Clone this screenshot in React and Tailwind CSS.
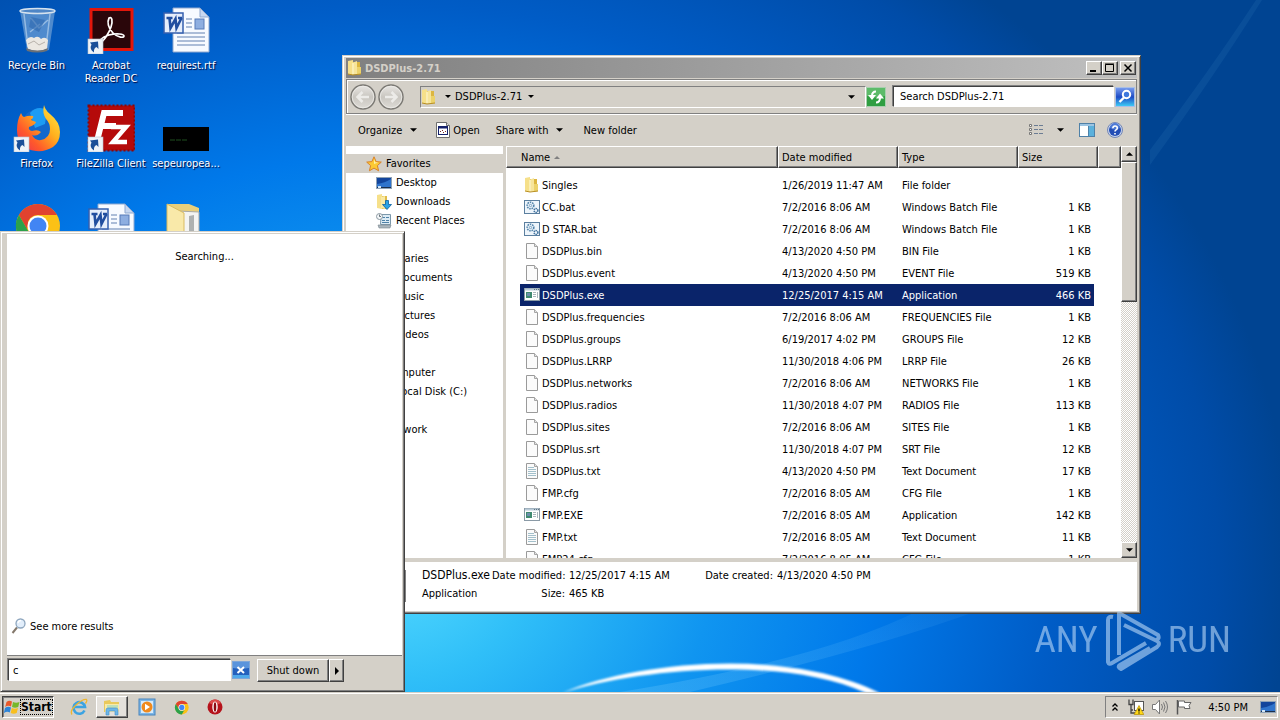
import React from "react";

const files = [
  { name: "Singles", date: "1/26/2019 11:47 AM", type: "File folder", size: "", icon: "folder" },
  { name: "CC.bat", date: "7/2/2016 8:06 AM", type: "Windows Batch File", size: "1 KB", icon: "batch" },
  { name: "D STAR.bat", date: "7/2/2016 8:06 AM", type: "Windows Batch File", size: "1 KB", icon: "batch" },
  { name: "DSDPlus.bin", date: "4/13/2020 4:50 PM", type: "BIN File", size: "1 KB", icon: "page" },
  { name: "DSDPlus.event", date: "4/13/2020 4:50 PM", type: "EVENT File", size: "519 KB", icon: "page" },
  { name: "DSDPlus.exe", date: "12/25/2017 4:15 AM", type: "Application", size: "466 KB", icon: "app", selected: true },
  { name: "DSDPlus.frequencies", date: "7/2/2016 8:06 AM", type: "FREQUENCIES File", size: "1 KB", icon: "page" },
  { name: "DSDPlus.groups", date: "6/19/2017 4:02 PM", type: "GROUPS File", size: "12 KB", icon: "page" },
  { name: "DSDPlus.LRRP", date: "11/30/2018 4:06 PM", type: "LRRP File", size: "26 KB", icon: "page" },
  { name: "DSDPlus.networks", date: "7/2/2016 8:06 AM", type: "NETWORKS File", size: "1 KB", icon: "page" },
  { name: "DSDPlus.radios", date: "11/30/2018 4:07 PM", type: "RADIOS File", size: "113 KB", icon: "page" },
  { name: "DSDPlus.sites", date: "7/2/2016 8:06 AM", type: "SITES File", size: "1 KB", icon: "page" },
  { name: "DSDPlus.srt", date: "11/30/2018 4:07 PM", type: "SRT File", size: "12 KB", icon: "page" },
  { name: "DSDPlus.txt", date: "4/13/2020 4:50 PM", type: "Text Document", size: "17 KB", icon: "text" },
  { name: "FMP.cfg", date: "7/2/2016 8:05 AM", type: "CFG File", size: "1 KB", icon: "page" },
  { name: "FMP.EXE", date: "7/2/2016 8:05 AM", type: "Application", size: "142 KB", icon: "app" },
  { name: "FMP.txt", date: "7/2/2016 8:05 AM", type: "Text Document", size: "11 KB", icon: "text" },
  { name: "FMP24.cfg", date: "7/2/2016 8:05 AM", type: "CFG File", size: "1 KB", icon: "page" },
];

const raised =
  "border border-t-white border-l-white border-r-[#404040] border-b-[#404040] shadow-[inset_-1px_-1px_0_#808080]";
const sunken =
  "border border-t-[#808080] border-l-[#808080] border-r-white border-b-white";

/* ---------- small icons ---------- */

const FolderIcon = ({ className = "w-4 h-4" }) => (
  <svg viewBox="0 0 16 16" className={className} aria-hidden="true">
    <path d="M1 1l5-1v15l-5-1z" fill="#f6e08a" />
    <path d="M6 2h7v12H6z" fill="#dcb640" />
    <path d="M5 3l5-2v13l-5 1z" fill="#f7e59a" />
    <path d="M10 7h4v7l-4 1z" fill="#ecd26a" />
    <path d="M1 14l5 1 8-1" stroke="#b98f22" fill="none" />
    <path d="M6 3v11" stroke="#fdf6cf" />
  </svg>
);

const PageIcon = ({ lines }) => (
  <svg viewBox="0 0 16 16" className="w-4 h-4" aria-hidden="true">
    <path d="M2.500 .5h8l3 3v12h-11z" fill="#fbfbfb" stroke="#9a9a9a" />
    <path d="M10.500 .5v3h3" fill="#e4e4e4" stroke="#a5a5a5" />
    {lines && <path d="M4 4.500h6M4 6.500h8M4 8.500h8M4 10.500h8M4 12.500h8" stroke="#a3c0cb" />}
  </svg>
);

const BatchIcon = () => (
  <svg viewBox="0 0 16 16" className="w-4 h-4" aria-hidden="true">
    <rect x=".5" y="1.500" width="15" height="13" fill="#eef5fb" stroke="#5b7f9f" />
    <circle cx="6.500" cy="6.500" r="3.300" fill="none" stroke="#5586ac" strokeWidth="1.600" strokeDasharray="1.600 .8" />
    <circle cx="6.500" cy="6.500" r="1.200" fill="none" stroke="#7da3c2" />
    <circle cx="12" cy="11.500" r="1.900" fill="none" stroke="#41729d" strokeWidth="1.500" strokeDasharray="1.300 .6" />
  </svg>
);

const AppIcon = () => (
  <svg viewBox="0 0 16 16" className="w-4 h-4" aria-hidden="true">
    <rect x=".5" y="1.500" width="15" height="12" fill="#fff" stroke="#8a9aa6" />
    <path d="M1 2.500h14" stroke="#b9cbd8" strokeWidth="2" />
    <path d="M10 2.500h1M12 2.500h1M14 2.500h1" stroke="#5f7382" />
    <rect x="2" y="5" width="6" height="6" fill="#3f8a70" />
    <rect x="3" y="6" width="3" height="3" fill="#6d8fae" />
    <path d="M9 5.500h3M9 7.500h3M9 9.500h3M13.500 5v6" stroke="#a9b5bb" />
  </svg>
);

const FileIcon = ({ kind }) => {
  if (kind === "folder") return <FolderIcon />;
  if (kind === "batch") return <BatchIcon />;
  if (kind === "app") return <AppIcon />;
  return <PageIcon lines={kind === "text"} />;
};

const DesktopIcon = () => (
  <svg viewBox="0 0 16 16" className="w-4 h-4" aria-hidden="true">
    <rect x="0" y="2" width="16" height="12" fill="#8fa3b7" />
    <rect x="1" y="3" width="14" height="9" fill="#12459c" />
    <path d="M1 12V9q8-1 14-5v8z" fill="#2f74cc" />
    <path d="M1 12.500h14" stroke="#1c2f4b" />
    <rect x="2" y="11" width="3" height="2" fill="#cfe4f7" />
  </svg>
);

const DownloadsIcon = () => (
  <svg viewBox="0 0 16 16" className="w-4 h-4" aria-hidden="true">
    <path d="M1 1l5-1v15l-5-1z" fill="#f6e08a" />
    <path d="M6 2h5v13H6z" fill="#e0bb48" />
    <path d="M5 3l4-1v13l-4-1z" fill="#f9eaa6" />
    <path d="M9.500 6.500h3v4h3l-4.500 5-4.500-5h3z" fill="#2aa3e6" stroke="#0b5f9e" strokeWidth=".8" />
  </svg>
);

const RecentIcon = () => (
  <svg viewBox="0 0 16 16" className="w-4 h-4" aria-hidden="true">
    <path d="M5 1.500h9.500v10H4.500z" fill="#dcebf4" stroke="#7c98ab" />
    <path d="M6 4.500h3M10 4.500h3M6 7.500h3M10 7.500h3M6 9.500h7" stroke="#4f82a8" />
    <path d="M2 12h13l-1 3H3z" fill="#aab5bd" stroke="#7b868e" strokeWidth=".6" />
    <circle cx="3.500" cy="3.500" r="3" fill="#f4f7f9" stroke="#8d9aa3" />
    <path d="M3.500 1.500v2h1.500" stroke="#44525c" strokeWidth=".8" fill="none" />
  </svg>
);

const StarIcon = () => (
  <svg viewBox="0 0 16 16" className="w-4 h-4" aria-hidden="true">
    <path
      d="M8 .8l2.100 4.800 5.200.5-3.900 3.500 1.200 5.200L8 12.100l-4.600 2.700 1.200-5.200L.7 6.100l5.200-.5z"
      fill="#fcc934"
      stroke="#d9822b"
    />
    <path d="M8 3l1.200 3.300 3 .3L8 8z" fill="#fff1a8" />
  </svg>
);

const Caret = ({ className = "w-2 h-1" }) => (
  <svg viewBox="0 0 8 4" className={className} aria-hidden="true">
    <path d="M0 0h8L4 4z" fill="#000" />
  </svg>
);

const NavArrow = ({ flip }) => (
  <svg viewBox="0 0 26 26" className="w-[26px] h-[26px]" aria-hidden="true">
    <defs>
      <linearGradient id="navFill" x1="0" y1="0" x2="0" y2="1">
        <stop offset="0" stopColor="#e9e7e4" />
        <stop offset=".5" stopColor="#c9c6c0" />
        <stop offset="1" stopColor="#dedcd7" />
      </linearGradient>
    </defs>
    <circle cx="13" cy="13" r="12" fill="url(#navFill)" stroke="#7b7974" strokeWidth="1.500" />
    <circle cx="13" cy="13" r="10.800" fill="none" stroke="#efedea" strokeWidth=".8" />
    <path
      d="M19 13H8M12.500 8L7.500 13l5 5"
      transform={flip ? "rotate(180 13 13)" : undefined}
      fill="none"
      stroke="#ecebe8"
      strokeWidth="2.500"
    />
  </svg>
);

const RefreshIcon = () => (
  <svg viewBox="0 0 20 20" className="w-5 h-5" aria-hidden="true">
    <rect x=".5" y=".5" width="19" height="19" fill="#2f9e41" stroke="#a8cfae" />
    <path d="M1 1h18v8Q10 12 1 9z" fill="#5dbb69" />
    <path d="M10 4.500Q6 4.500 6 9" fill="none" stroke="#fff" strokeWidth="2" />
    <path d="M2 8h8l-4 5z" fill="#fff" />
    <path d="M10 15.500q4 0 4-5" fill="none" stroke="#fff" strokeWidth="2" />
    <path d="M10 11.500h8l-4-5z" fill="#fff" />
  </svg>
);

const SearchButtonIcon = () => (
  <svg viewBox="0 0 20 20" className="w-5 h-5" aria-hidden="true">
    <defs>
      <linearGradient id="searchFill" x1="0" y1="0" x2="0" y2="1">
        <stop offset="0" stopColor="#7b9ff0" />
        <stop offset=".5" stopColor="#1d4ac4" />
        <stop offset="1" stopColor="#3fd0f8" />
      </linearGradient>
    </defs>
    <rect x=".5" y=".5" width="19" height="19" fill="url(#searchFill)" stroke="#a9bfe6" />
    <circle cx="11.500" cy="7.500" r="3.700" fill="#3e78dd" stroke="#fff" strokeWidth="2" />
    <path d="M9 10.500L4.500 15" stroke="#fff" strokeWidth="2.400" />
  </svg>
);

const OpenIcon = () => (
  <svg viewBox="0 0 16 16" className="w-4 h-4" aria-hidden="true">
    <path d="M1.500 .5h10l3 3v12h-13z" fill="#fff" stroke="#6e6e6e" />
    <path d="M11.500 .5v3h3" fill="#ddd" stroke="#6e6e6e" />
    <rect x="3.500" y="4.500" width="9" height="8" fill="#fff" stroke="#14206b" />
    <path d="M3 5.500h10" stroke="#14206b" strokeWidth="2" />
    <path d="M5 9.500h1M7 8.500h1M8 10.500h1M10 9.500h1" stroke="#7d2b2b" />
  </svg>
);

const ViewIcon = () => (
  <svg viewBox="0 0 16 16" className="w-4 h-4" aria-hidden="true">
    <path d="M1.500 2.500h2v2h-2zM1.500 6.500h2v2h-2zM1.500 10.500h2v2h-2z" fill="#fff" stroke="#777" />
    <path d="M6 3.500h4M11 3.500h4M6 7.500h4M11 7.500h4M6 11.500h4M11 11.500h4" stroke="#6b7c93" />
  </svg>
);

const PaneIcon = () => (
  <svg viewBox="0 0 16 16" className="w-4 h-4" aria-hidden="true">
    <rect x=".5" y="1.500" width="15" height="13" fill="#fff" stroke="#4f81a8" />
    <path d="M1 3h14" stroke="#9cc4e2" strokeWidth="2" />
    <rect x="10" y="4" width="5" height="10" fill="#5bb1dc" />
    <path d="M9.500 4v10" stroke="#4f81a8" />
  </svg>
);

const HelpIcon = () => (
  <svg viewBox="0 0 16 16" className="w-4 h-4" aria-hidden="true">
    <circle cx="8" cy="8" r="7.500" fill="#c6d3ee" stroke="#7386b5" />
    <circle cx="8" cy="8" r="6" fill="#234db5" />
    <path d="M3 6a5 5 0 0 1 10 0Q8 9 3 6z" fill="#4f7ad6" />
    <path d="M5.800 6.300Q6 4 8 4q2.300 0 2.300 2 0 1.200-1.300 1.900-1 .6-1 1.600M8 11v1.600" fill="none" stroke="#fff" strokeWidth="1.600" />
  </svg>
);

const MagnifierIcon = () => (
  <svg viewBox="0 0 16 16" className="w-4 h-4" aria-hidden="true">
    <path d="M6 9.500L1.500 15" stroke="#84786b" strokeWidth="2" />
    <circle cx="9.500" cy="5.500" r="4.500" fill="#e2eefb" stroke="#8ea6be" strokeWidth="1.300" />
    <path d="M7 5q.5-2.500 3-2.500" stroke="#fff" strokeWidth="1.300" fill="none" />
  </svg>
);

const ClearIcon = () => (
  <svg viewBox="0 0 18 18" className="w-[18px] h-[18px]" aria-hidden="true">
    <rect x=".5" y=".5" width="17" height="17" fill="#2460bd" stroke="#7ea6d8" />
    <path d="M1 1h16v6Q9 8 1 7z" fill="#5a94dc" />
    <path d="M1 14h16v3H1z" fill="#4fa8ea" />
    <path d="M5.500 6l6.500 6M12 6l-6.500 6" stroke="#fff" strokeWidth="2" />
  </svg>
);

/* ---------- desktop icons ---------- */

const Shortcut = ({ x = 0, y = 32 }) => (
  <g transform={`translate(${x} ${y})`}>
    <rect width="15" height="15" fill="#eef3f8" stroke="#b9c2cb" strokeWidth=".6" />
    <path d="M6 13.500Q1 10 3.500 5.500L2 3.500 10 2.500 10.500 10 8.500 8Q5.500 9 6 13.500z" fill="#1a4f98" />
  </g>
);

const RecycleBin = () => (
  <svg viewBox="0 0 48 48" className="w-12 h-12" aria-hidden="true">
    <path d="M7 5h35l-6 39q-12 4-22 0z" fill="#8fb6dd" fillOpacity=".55" />
    <path d="M11 8l4 33M37 8l-4 33M18 12l8 10 9-8M17 26l10-8" stroke="#dcebfa" strokeOpacity=".5" strokeWidth="1.500" fill="none" />
    <path d="M18 11l14 3-6 12-10-5z" fill="#2e67ae" fillOpacity=".6" />
    <path d="M13 34q4-5 8-2 4-3 7 1 4-3 7 1l-1 9q-10 4-19 0z" fill="#ece8e2" />
    <path d="M15 38l6-3 5 4 6-3" stroke="#b7b1aa" fill="none" />
    <path d="M13 42q12 5 22 0l-1 3q-10 3-20 0z" fill="#6c7076" />
    <ellipse cx="24.500" cy="5" rx="17.500" ry="2.500" fill="#4f86c6" stroke="#d5e2ee" strokeWidth="1.500" />
  </svg>
);

const AcrobatIcon = () => (
  <svg viewBox="0 0 48 48" className="w-12 h-12" aria-hidden="true">
    <rect x="2.500" y="2" width="44" height="43" fill="#e2160b" />
    <rect x="5.500" y="5" width="38" height="37" fill="#2a060a" />
    <path
      d="M22 12c3-2 4 3 2 9s-7 14-11 16c-3 0 1-6 9-8s15-1 15 1-6 2-11-3-6-11-4-15z"
      fill="none"
      stroke="#fff"
      strokeWidth="1.700"
    />
    <Shortcut x={1} y={33} />
  </svg>
);

const WordDoc = () => (
  <svg viewBox="0 0 48 48" className="w-12 h-12" aria-hidden="true">
    <path d="M11 2h27l9 9v35H11z" fill="#f7faff" stroke="#8fa8cf" />
    <path d="M38 2v9h9z" fill="#c7d7f0" stroke="#8fa8cf" />
    <path d="M24 13h6M24 17h6M24 21h6M15 31h28M15 35h28M15 39h28M15 27h28" stroke="#94a9cc" strokeWidth="1.300" />
    <rect x="33" y="13" width="9" height="10" fill="#8eaee0" stroke="#577bb8" />
    <rect x="2" y="7" width="19" height="20" fill="#e6eefb" stroke="#355fae" strokeWidth="1.500" />
    <path d="M5 12h5M4.500 12h6M7.500 12l1 10 5-9 1 9 5-10M16 12h4" fill="none" stroke="#214e9f" strokeWidth="2.600" />
  </svg>
);

const FirefoxIcon = () => (
  <svg viewBox="0 0 48 48" className="w-12 h-12" aria-hidden="true">
    <defs>
      <linearGradient id="foxFill" x1="1" y1="0" x2="0" y2="1">
        <stop offset="0" stopColor="#fff14a" />
        <stop offset=".4" stopColor="#ffb01e" />
        <stop offset=".7" stopColor="#ff5a2a" />
        <stop offset="1" stopColor="#ea2a58" />
      </linearGradient>
    </defs>
    <circle cx="25" cy="21" r="16" fill="#1268cc" />
    <path d="M17 9q7-8 17-3l-2 14-10 4z" fill="#1c9cf4" />
    <path
      d="M31 1q1 5 6 9 10 8 10 18 0 10-7 15-8 5-17 4Q4 45 4 26q0-10 4-17 1 3 3 4 5-2 9-1 1 1-2 4l5 2q-1 3-7 5-1 3 3 4 6-2 9 1-4 5-9 3 3 6 9 5 9-2 9-11 0-6-4-10-4-6-2-14z"
      fill="url(#foxFill)"
    />
    <Shortcut x={1} y={33} />
  </svg>
);

const FileZillaIcon = () => (
  <svg viewBox="0 0 48 48" className="w-12 h-12" aria-hidden="true">
    <rect x="1.500" y="1.500" width="46" height="45" fill="#b50a0a" stroke="#8c0606" strokeWidth="2" strokeDasharray="2 2" />
    <path d="M10 37L17 9h19M14 22h15" stroke="#fff" strokeWidth="6" fill="none" />
    <path d="M24 23h15L26 38h14" stroke="#fff" strokeWidth="4.500" fill="none" />
    <Shortcut x={1} y={33} />
  </svg>
);

const BlackThumb = () => (
  <svg viewBox="0 0 48 48" className="w-12 h-12" aria-hidden="true">
    <rect x="1" y="23" width="46" height="24" fill="#000" />
    <path d="M8 36h17" stroke="#1f4f1f" strokeDasharray="5 1" />
  </svg>
);

const ChromeIcon = ({ className = "w-12 h-12" }) => (
  <svg viewBox="0 0 48 48" className={className} aria-hidden="true">
    <circle cx="25" cy="24" r="22" fill="#fbc116" />
    <path d="M5.900 13A22 22 0 0 1 44 13H25a11 11 0 0 0-9.500 5.500L14 27z" fill="#e0422f" />
    <path d="M5.900 13A22 22 0 0 0 25 46l9.500-16.500a11 11 0 0 1-19 0z" fill="#2ba14b" />
    <circle cx="25" cy="24" r="10.500" fill="#fff" />
    <circle cx="25" cy="24" r="8.500" fill="#4285f4" />
  </svg>
);

const BigFolder = () => (
  <svg viewBox="0 0 48 48" className="w-12 h-12" aria-hidden="true">
    <path d="M6 2h21l10 4v40H6z" fill="#e9cf7a" />
    <path d="M16 9l21 1v36H16z" fill="#f4f4f2" stroke="#a9a9a4" />
    <path d="M27 14l5-1v34h-5z" fill="#aeb1b0" />
    <path d="M5 2l17 9v37L5 42z" fill="#f9e9a9" stroke="#d9bb60" />
  </svg>
);

const shortcuts = [
  { label: "Recycle Bin", Icon: RecycleBin },
  { label: "Acrobat Reader DC", Icon: AcrobatIcon },
  { label: "requirest.rtf", Icon: WordDoc },
  { label: "Firefox", Icon: FirefoxIcon },
  { label: "FileZilla Client", Icon: FileZillaIcon },
  { label: "sepeuropea...", Icon: BlackThumb },
  { Icon: ChromeIcon },
  { Icon: WordDoc },
  { Icon: BigFolder },
];

const Wallpaper = () => (
  <svg viewBox="0 0 1280 720" preserveAspectRatio="none" className="absolute inset-0 w-full h-full" aria-hidden="true">
    <defs>
      <radialGradient id="sky" gradientUnits="userSpaceOnUse" cx="0" cy="0" r="1" gradientTransform="translate(390 560) scale(900 750)">
        <stop offset="0" stopColor="#56dcff" />
        <stop offset=".16" stopColor="#30bff8" />
        <stop offset=".36" stopColor="#1095f0" />
        <stop offset=".54" stopColor="#0079ea" />
        <stop offset=".74" stopColor="#005cc6" />
        <stop offset=".92" stopColor="#004ca8" />
        <stop offset="1" stopColor="#004492" />
      </radialGradient>
      <linearGradient id="beam" x1="0" y1="1" x2="1" y2="0">
        <stop offset="0" stopColor="#7fd0ff" stopOpacity=".25" />
        <stop offset="1" stopColor="#7fd0ff" stopOpacity=".06" />
      </linearGradient>
      <filter id="soft">
        <feGaussianBlur stdDeviation="1" />
      </filter>
    </defs>
    <rect width="1280" height="720" fill="url(#sky)" />
    <path d="M690 692Q870 650 980 610H920Q820 660 620 692z" fill="url(#beam)" />
    <path d="M1150 150Q1210 70 1256 0l6 0Q1215 75 1150 165z" fill="#7fd0ff" fillOpacity=".07" />
    <path d="M562 693C640 660 790 648 880 693L866 693C785 656 640 668 562 693z" fill="#fff" filter="url(#soft)" />
  </svg>
);

/* ---------- explorer window ---------- */

const TitleButton = ({ label, children, className = "" }) => (
  <button type="button" aria-label={label} className={`w-4 h-[14px] bg-[#d4d0c8] flex items-center justify-center ${raised} ${className}`}>
    <svg viewBox="0 0 10 10" className="w-[10px] h-[10px]" aria-hidden="true">
      {children}
    </svg>
  </button>
);

const TreeItem = ({ icon, label, root, active }) => (
  <li className={`h-[19px] flex items-center gap-1 leading-[14px] whitespace-nowrap ${root ? "pl-5" : "pl-[30px]"} ${active ? "bg-[#d4d0c8]" : ""}`}>
    <span className="w-4 h-4 shrink-0">{icon}</span>
    {label}
  </li>
);

const Sidebar = () => (
  <nav aria-label="Folders" className="w-[157px] shrink-0 bg-white pt-2 overflow-hidden">
    <ul className="mb-[19px]">
      <TreeItem root active icon={<StarIcon />} label="Favorites" />
      <TreeItem icon={<DesktopIcon />} label="Desktop" />
      <TreeItem icon={<DownloadsIcon />} label="Downloads" />
      <TreeItem icon={<RecentIcon />} label="Recent Places" />
    </ul>
    <ul className="mb-[19px]">
      <TreeItem root label="Libraries" />
      <TreeItem label="Documents" />
      <TreeItem label="Music" />
      <TreeItem label="Pictures" />
      <TreeItem label="Videos" />
    </ul>
    <ul className="mb-[19px]">
      <TreeItem root label="Computer" />
      <TreeItem label="Local Disk (C:)" />
    </ul>
    <ul>
      <TreeItem root label="Network" />
    </ul>
  </nav>
);

const headCell =
  "h-[22px] p-0 text-left font-normal bg-[#d4d0c8] border border-t-white border-l-white border-r-[#404040] border-b-[#404040] shadow-[inset_-1px_-1px_0_#808080]";

const FileTable = () => (
  <div className="flex-1 min-w-0 bg-white overflow-hidden">
    <table className="w-full table-fixed border-separate border-spacing-0">
      <colgroup>
        <col className="w-[272px]" />
        <col className="w-[120px]" />
        <col className="w-[120px]" />
        <col className="w-20" />
        <col />
      </colgroup>
      <thead>
        <tr>
          <th className={headCell}>
            <span className="flex items-center gap-1 pl-[14px]">
              Name
              <svg viewBox="0 0 6 3" className="w-[6px] h-[3px]" aria-hidden="true">
                <path d="M0 3h6L3 0z" fill="#808080" />
              </svg>
            </span>
          </th>
          <th className={`${headCell} pl-[3px]`}>Date modified</th>
          <th className={`${headCell} pl-[3px]`}>Type</th>
          <th className={`${headCell} pl-[3px]`}>Size</th>
          <th className={headCell} aria-label="More columns" />
        </tr>
      </thead>
      <tbody className="before:block before:h-[6px]">
        {files.map((file) => {
          const tone = file.selected ? "bg-[#0a246a] text-white" : "";
          return (
            <tr key={file.name} className="whitespace-nowrap">
              <td className="p-0 pl-[14px]">
                <div className={`h-[22px] flex items-center gap-[2px] pl-1 ${tone}`}>
                  <FileIcon kind={file.icon} />
                  {file.name}
                </div>
              </td>
              <td className="p-0">
                <div className={`h-[22px] flex items-center pl-1 ${tone}`}>{file.date}</div>
              </td>
              <td className="p-0">
                <div className={`h-[22px] flex items-center pl-1 ${tone}`}>{file.type}</div>
              </td>
              <td className="p-0 pr-1">
                <div className={`h-[22px] flex items-center justify-end pr-[3px] ${tone}`}>{file.size}</div>
              </td>
              <td className="p-0" />
            </tr>
          );
        })}
      </tbody>
    </table>
  </div>
);

const Scrollbar = () => (
  <div className="w-4 shrink-0 flex flex-col bg-[repeating-conic-gradient(#fff_0%_25%,#d4d0c8_0%_50%)] bg-[length:2px_2px]">
    <button type="button" aria-label="Scroll up" className={`h-4 bg-[#d4d0c8] flex items-center justify-center ${raised}`}>
      <Caret className="w-[7px] h-1 rotate-180" />
    </button>
    <div className={`h-[140px] bg-[#d4d0c8] ${raised}`} />
    <button type="button" aria-label="Scroll down" className={`h-4 mt-auto bg-[#d4d0c8] flex items-center justify-center ${raised}`}>
      <Caret className="w-[7px] h-1" />
    </button>
  </div>
);

const ExplorerWindow = () => (
  <section
    aria-label="DSDPlus-2.71"
    className="absolute left-[342px] right-[139px] top-[55px] bottom-[78px] flex flex-col bg-[#d4d0c8] p-[2px] border border-t-[#d4d0c8] border-l-[#d4d0c8] border-r-[#404040] border-b-[#404040] shadow-[inset_1px_1px_0_#fff,inset_-1px_-1px_0_#808080]"
  >
    <div className="h-5 mx-px pl-px pr-px flex items-center bg-linear-to-r from-[#808080] to-[#c0c0c0] shrink-0">
      <FolderIcon />
      <h1 className="pl-[2px] flex-1 font-bold text-[#d4d0c8]">DSDPlus-2.71</h1>
      <TitleButton label="Minimize">
        <path d="M1 8h6" stroke="#000" strokeWidth="2" />
      </TitleButton>
      <TitleButton label="Maximize">
        <path d="M.5 1.500h8v7h-8zM0 1h9" fill="none" stroke="#000" />
      </TitleButton>
      <TitleButton label="Close" className="ml-[2px]">
        <path d="M1.500 1.500l7 7M8.500 1.500l-7 7" stroke="#000" strokeWidth="1.500" />
      </TitleButton>
    </div>

    <div className="h-[35px] mx-px mt-px pl-[3px] pr-px flex items-center border border-[#808080] shadow-[inset_1px_1px_0_#fff,0_1px_0_#fff] shrink-0">
      <button type="button" aria-label="Back" className="mr-[2px]">
        <NavArrow />
      </button>
      <button type="button" aria-label="Forward">
        <NavArrow flip />
      </button>
      <div className={`h-[22px] ml-4 flex-1 flex items-center ${sunken}`}>
        <FolderIcon />
        <Caret className="w-[6px] h-[3px] ml-2 mr-1" />
        <span>DSDPlus-2.71</span>
        <Caret className="w-[6px] h-[3px] ml-[6px]" />
        <Caret className="w-[7px] h-1 ml-auto mr-[10px]" />
      </div>
      <button type="button" aria-label="Refresh">
        <RefreshIcon />
      </button>
      <input
        type="text"
        aria-label="Search DSDPlus-2.71"
        placeholder="Search DSDPlus-2.71"
        className="w-[221px] h-[21px] ml-[7px] px-[6px] bg-white placeholder:text-black border border-t-[#404040] border-l-[#404040] border-r-white border-b-white shadow-[-1px_-1px_0_#808080]"
      />
      <button type="button" aria-label="Search" className="ml-px">
        <SearchButtonIcon />
      </button>
    </div>

    <div className="h-8 mx-px pl-3 pr-[14px] flex items-center shrink-0">
      <button type="button" className="flex items-center gap-2">
        Organize <Caret className="w-[7px] h-1" />
      </button>
      <button type="button" className="ml-[18px] flex items-center gap-[2px]">
        <OpenIcon /> Open
      </button>
      <button type="button" className="ml-4 flex items-center gap-2">
        Share with <Caret className="w-[7px] h-1" />
      </button>
      <button type="button" className="ml-5">
        New folder
      </button>
      <button type="button" aria-label="Change view" className="ml-auto flex items-center gap-[13px]">
        <ViewIcon />
        <Caret className="w-[7px] h-1" />
      </button>
      <button type="button" aria-label="Preview pane" className="ml-[15px]">
        <PaneIcon />
      </button>
      <button type="button" aria-label="Help" className="ml-3">
        <HelpIcon />
      </button>
    </div>

    <div className="flex-1 min-h-0 mx-px flex">
      <Sidebar />
      <div className="w-[3px] shrink-0 bg-[#d4d0c8]" />
      <FileTable />
      <Scrollbar />
    </div>

    <div className="h-[49px] mx-px mt-1 pt-1 pl-4 flex items-start bg-white shrink-0">
      <div className="w-11 h-8 mt-1 border border-[#808080]" />
      <dl className="pl-4 grid grid-cols-[70px_77px_136px_72px_auto] auto-rows-[18px] items-center whitespace-nowrap">
        <dt className="text-[12px]">DSDPlus.exe</dt>
        <dd className="text-right pr-1">Date modified:</dd>
        <dd>12/25/2017 4:15 AM</dd>
        <dd className="text-right pr-1">Date created:</dd>
        <dd>4/13/2020 4:50 PM</dd>
        <dt>Application</dt>
        <dd className="text-right pr-1">Size:</dd>
        <dd>465 KB</dd>
      </dl>
    </div>
  </section>
);

/* ---------- start menu, taskbar ---------- */

const StartMenu = () => (
  <section
    aria-label="Start menu"
    className="absolute left-0 top-[231px] bottom-0 w-[405px] flex flex-col bg-[#d4d0c8] border border-t-[#d4d0c8] border-l-[#d4d0c8] border-r-[#404040] border-b-[#404040] shadow-[inset_1px_1px_0_#fff,inset_-1px_-1px_0_#808080]"
  >
    <div className="flex-1 mt-[2px] ml-[6px] mr-[2px] bg-white flex flex-col border-b border-[#808080]">
      <p className="pt-4 text-center">Searching...</p>
      <button type="button" className="mt-auto mb-[21px] ml-1 flex items-center gap-[3px] self-start">
        <MagnifierIcon /> See more results
      </button>
    </div>
    <div className="h-[35px] pl-[7px] pt-[3px] flex items-start">
      <input
        type="text"
        aria-label="Search programs and files"
        defaultValue="c"
        className="w-[223px] h-[22px] px-1 bg-white border border-t-[#404040] border-l-[#404040] border-r-white border-b-white shadow-[-1px_-1px_0_#808080]"
      />
      <button type="button" aria-label="Clear search" className="ml-px mt-[2px]">
        <ClearIcon />
      </button>
      <button type="button" className={`ml-[7px] w-[72px] h-[23px] ${raised}`}>
        Shut down
      </button>
      <button type="button" aria-label="Shut down options" className={`w-[15px] h-[23px] flex items-center justify-center ${raised}`}>
        <svg viewBox="0 0 4 8" className="w-1 h-2" aria-hidden="true">
          <path d="M0 0l4 4-4 4z" />
        </svg>
      </button>
    </div>
  </section>
);

const WindowsFlag = () => (
  <svg viewBox="0 0 16 16" className="w-4 h-4" aria-hidden="true">
    <path d="M2.500 3Q5 1 8 2.500L7 7.500Q4 6 1.200 8z" fill="#e8582a" />
    <path d="M9 3q3 1.500 6.500 0l-1.300 5Q11 9.500 8 8z" fill="#76b82a" />
    <path d="M1 9q3-2 6-.5L5.800 13.500Q3 12-.2 14z" fill="#2d84d8" />
    <path d="M7.800 9q3 1.500 6.200 0l-1.300 5q-3 1.500-6 0z" fill="#f8bf1d" />
  </svg>
);

const IeIcon = () => (
  <svg viewBox="0 0 18 18" className="w-[18px] h-[18px]" aria-hidden="true">
    <path d="M14.500 12.500a5.800 5.800 0 1 1 .5-3.500H5" fill="none" stroke="#3ba3e2" strokeWidth="2.600" />
    <path d="M2 16.500Q-.5 13 6 7t10.500-5.500Q17.500 3 15.500 5.500" fill="none" stroke="#eeb62f" strokeWidth="1.300" />
  </svg>
);

const ExplorerIcon = () => (
  <svg viewBox="0 0 18 18" className="w-[18px] h-[18px]" aria-hidden="true">
    <path d="M1 3l6-1 1 2h8v10H1z" fill="#e9c95c" />
    <path d="M2 6h14v8H2z" fill="#faeaa6" />
    <path d="M4 7h11v3H4z" fill="#bfe0b9" />
    <path d="M3 17v-5q0-2 2-2h8q2 0 2 2v5h-3v-4H6v4z" fill="#6cb6e8" stroke="#3f8fc9" strokeWidth=".6" />
  </svg>
);

const PlayerIcon = () => (
  <svg viewBox="0 0 18 18" className="w-[18px] h-[18px]" aria-hidden="true">
    <rect x="1" y="1" width="16" height="16" fill="#7db7e8" stroke="#4783bb" />
    <rect x="3" y="3" width="12" height="12" fill="#d8ebfa" />
    <circle cx="9" cy="9" r="5.500" fill="#f08a1d" />
    <path d="M7 5.800l5 3.200-5 3.200z" fill="#fff" />
  </svg>
);

const OperaIcon = () => (
  <svg viewBox="0 0 18 18" className="w-[18px] h-[18px]" aria-hidden="true">
    <circle cx="9" cy="9" r="7.500" fill="#b5121b" />
    <path d="M3 5a7 7 0 0 1 12 0Q9 8 3 5z" fill="#dc4a4a" />
    <ellipse cx="9" cy="9" rx="2.700" ry="5.500" fill="#fff" />
    <ellipse cx="9" cy="9" rx="1.300" ry="4.800" fill="#8c0b12" />
  </svg>
);

const Taskbar = () => (
  <footer className="relative h-7 shrink-0 bg-[#d4d0c8] shadow-[inset_0_1px_0_#d4d0c8,inset_0_2px_0_#fff] pt-[2px] px-[2px] flex items-center">
    <button
      type="button"
      className="w-[52px] h-[22px] pl-px flex items-center font-bold text-[12px] border border-t-[#404040] border-l-[#404040] border-r-white border-b-white shadow-[inset_1px_1px_0_#808080]"
    >
      <WindowsFlag />
      <span className="h-4 leading-[14px] border border-dotted border-black">Start</span>
    </button>
    <div className="ml-4 flex items-center">
      <button type="button" aria-label="Internet Explorer">
        <IeIcon />
      </button>
      <button type="button" aria-label="Windows Explorer" className={`w-8 h-[22px] ml-2 flex items-center justify-center bg-[#e4e1dc] ${raised}`}>
        <ExplorerIcon />
      </button>
      <button type="button" aria-label="Media Player" className="ml-[10px]">
        <PlayerIcon />
      </button>
      <button type="button" aria-label="Google Chrome" className="ml-4 w-[18px] flex justify-center">
        <ChromeIcon className="w-[15px] h-[15px]" />
      </button>
      <button type="button" aria-label="Opera" className="ml-4">
        <OperaIcon />
      </button>
    </div>
    <div className={`ml-auto h-[22px] pl-[6px] flex items-center ${sunken}`}>
      <svg viewBox="0 0 6 9" className="w-[6px] h-[9px]" aria-hidden="true">
        <path d="M.5 3.500L3 1l2.500 2.500M.5 7.500L3 5l2.500 2.500" fill="none" stroke="#000" strokeWidth="1.300" />
      </svg>
      <svg viewBox="0 0 16 16" className="w-4 h-4 ml-[10px]" aria-hidden="true">
        <rect x="6.500" y="2.500" width="9" height="9" fill="#fff" stroke="#555" />
        <path d="M1 .5v5h4v-5M3 5.500v8.500h4M3 11h2" fill="none" stroke="#444" strokeWidth="1.300" />
        <path d="M11 6.500l4.800 9H6.200z" fill="#ffd917" stroke="#b38b00" strokeWidth=".7" />
        <path d="M11 9.500v3M11 13.500v1" stroke="#000" strokeWidth="1.300" />
      </svg>
      <svg viewBox="0 0 16 16" className="w-4 h-4 ml-2" aria-hidden="true">
        <path d="M.5 5.500h3l4-4.500v14l-4-4.500h-3z" fill="#fff" stroke="#777" />
        <path d="M9.500 5q2 3 0 6M11.500 3.500q3 4.500 0 9M13.500 2q4 6 0 12" fill="none" stroke="#777" />
      </svg>
      <svg viewBox="0 0 16 16" className="w-4 h-4 ml-2" aria-hidden="true">
        <path d="M1.500 1v14.500" stroke="#555" strokeWidth="1.500" />
        <path d="M2.500 2h6v1.500h6.500l-2 3 1 3H8.500V8h-6z" fill="#fff" stroke="#666" />
      </svg>
      <time className="ml-4">4:50 PM</time>
      <button type="button" aria-label="Show desktop" className="ml-3 mr-px">
        <DesktopIcon />
      </button>
    </div>
  </footer>
);

const Watermark = () => (
  <div className="absolute right-[49px] bottom-5 flex items-center gap-[7px] text-[#b9d8f8] opacity-60 font-['Liberation_Sans_Narrow','Roboto_Condensed',sans-serif] text-[37px] leading-[64px]">
    <span>ANY</span>
    <svg viewBox="0 0 56 62" className="w-14 h-[62px]" fill="none" stroke="currentColor" strokeWidth="4" strokeLinejoin="round" aria-hidden="true">
      <path d="M8 8Q3 7 3 11v42q1 3 4 1l34-20" />
      <path d="M14 46V4l39 22q2 4-2 5" />
      <path d="M19 16l33 16q4 3 0 6L16 60q-4-2-1-4l30-17" />
    </svg>
    <span>RUN</span>
  </div>
);

const App = () => (
  <div className="relative h-screen flex flex-col overflow-hidden bg-[#0059c4] text-[11px] leading-[13px] text-black font-['Tahoma','DejaVu_Sans_Condensed',sans-serif]">
    <Wallpaper />
    <main className="relative flex-1 min-h-0">
      <ul className="grid grid-cols-[73px_76px_74px] auto-rows-[98px] pt-[6px] text-center text-white [text-shadow:1px_1px_1px_#003]">
        {shortcuts.map(({ label, Icon }, index) => (
          <li key={index} className="flex flex-col items-center gap-[5px]">
            <Icon />
            {label && <span>{label}</span>}
          </li>
        ))}
      </ul>
      <ExplorerWindow />
      <StartMenu />
      <Watermark />
    </main>
    <Taskbar />
  </div>
);

export default App;
